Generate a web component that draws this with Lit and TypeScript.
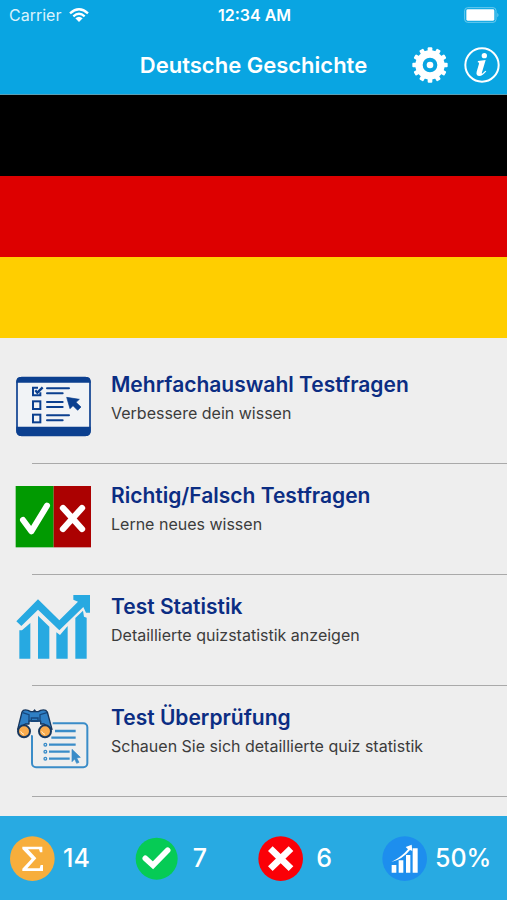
import { LitElement, html, css, svg } from "lit";
import { customElement } from "lit/decorators.js";

const quizIcon = html`<svg class="art" viewBox="45 18 240 210" aria-hidden="true">
  <rect x="51" y="38" width="219" height="173" rx="14" fill="#f1f3f6" stroke="#0b3f8f" stroke-width="5" />
  <path d="M49 53V49Q49 36 62 36H259Q272 36 272 49V53ZM49 185H272V199Q272 213 258 213H63Q49 213 49 199Z" fill="#0b3f8f" />
  <g fill="none" stroke="#0b3f8f" stroke-width="6">
    <path d="M114 68H99V91H121V82" />
    <path d="M106 76L112 83L128 67" stroke-width="7" />
    <rect x="99" y="109" width="22" height="23" />
    <rect x="99" y="149" width="22" height="23" />
    <path d="M141 70H207M141 85H188M141 111H188M141 126H188M141 151H207M141 166H188" stroke-width="6" stroke-linecap="round" />
  </g>
  <path d="M200 97L238 103L228 112L243 126L233 136L219 122L210 131Z" fill="#0b3f8f" stroke="#0b3f8f" stroke-width="2" />
</svg>`;

const trueFalseIcon = html`<svg class="art" viewBox="45 21 240 210" aria-hidden="true">
  <rect x="47" y="33" width="114" height="184" fill="#019a01" />
  <rect x="161" y="33" width="112" height="184" fill="#ab0101" />
  <g fill="none" stroke="#fff" stroke-width="18" stroke-linecap="round" stroke-linejoin="round">
    <path d="M69 135L94 169L141 92" />
    <path d="M189 99L246 162M246 99L189 162" stroke-width="19" />
  </g>
</svg>`;

const statsIcon = html`<svg class="art" viewBox="45 24 240 210" aria-hidden="true">
  <g fill="#27a9e1">
    <path d="M58 136L66 136L91 114V221H58ZM114 92L148 125V221H114ZM169 142L180 150L203 123V221H169ZM226 99L249 77L252 95L260 98V221H226Z" />
    <path d="M49 109L114 43L178 106L234 50L220 44V30H270V83H258L250 66L178 136L114 74L64 123Z" />
  </g>
</svg>`;

const reviewIcon = html`<svg class="art" viewBox="45 24 240 210" aria-hidden="true">
  <rect x="96" y="82" width="166" height="132" rx="12" fill="none" stroke="#3a8cc8" stroke-width="6" />
  <path d="M60 76L76 40H132L158 78V108L138 128L90 116Z" fill="#eee" />
  <g fill="none" stroke="#3a8cc8" stroke-width="7">
    <path d="M165 105H227M154 125H227M147 146H227M147 167H209M147 188H209" />
    <g stroke-width="4"><circle cx="136" cy="146" r="4" /><circle cx="136" cy="167" r="4" /><circle cx="136" cy="188" r="4" /></g>
  </g>
  <path d="M216 160L241 184L230 186L237 199L230 202L224 189L216 197Z" fill="#3a8cc8" stroke="#3a8cc8" stroke-width="2" />
  <path d="M53 100L66 48Q70 39 84 43L92 47H115L122 43Q137 39 142 48L156 100L132 84H122V75H87V84H76Z" fill="#2f7fc4" stroke="#17375e" stroke-width="4" stroke-linejoin="round" />
  <path d="M68 50L87 56V78M141 50L120 56V78M94 66H114V76H94Z" fill="none" stroke="#17477c" stroke-width="4" />
  <path d="M97 47L104 39L110 47Z" fill="#17375e" />
  <g fill="#f9ab4d" stroke="#17375e" stroke-width="6">
    <circle cx="72" cy="106" r="18" /><circle cx="135" cy="106" r="18" />
  </g>
  <path d="M62 106Q65 114 72 115M125 106Q128 114 135 115" fill="none" stroke="#fff0d0" stroke-width="3" />
</svg>`;

const teeth = Array.from({ length: 12 }, (_, i) => i * 30);

const gearIcon = html`<svg class="tool" viewBox="0 0 108 108" aria-hidden="true">
  <g fill="#fff">${teeth.map((a) => svg`<rect x="47" y="1" width="14" height="20" rx="3" transform="rotate(${a} 54 54)" />`)}</g>
  <circle cx="54" cy="54" r="33" fill="none" stroke="#fff" stroke-width="22" />
  <circle cx="54" cy="54" r="10" fill="#fff" />
</svg>`;

const infoIcon = html`<svg class="tool" viewBox="0 0 108 108" aria-hidden="true">
  <circle cx="54" cy="54" r="50" fill="none" stroke="#fff" stroke-width="6" />
  <circle cx="61" cy="26" r="8" fill="#fff" />
  <path d="M42 42L65 39L54 76Q52 82 56 79L64 71L67 73Q56 87 46 87Q35 86 38 74L45 50Q46 46 41 46Z" fill="#fff" />
</svg>`;

const sumBadge = html`<svg class="badge" viewBox="0 0 135 135" aria-hidden="true">
  <circle cx="67" cy="68" r="67" fill="#f7ae3c" />
  <path d="M37 32H97V49H90L87 40H54L79 67L52 97H89L92 87H99V105H37V98L65 68L37 39Z" fill="#fff" />
</svg>`;

const rightBadge = html`<svg class="badge" viewBox="0 0 135 135" aria-hidden="true">
  <circle cx="68" cy="68" r="63" fill="#06cb55" />
  <path d="M34 67L57 88L101 43" fill="none" stroke="#fff" stroke-width="17" stroke-linecap="round" stroke-linejoin="miter" />
</svg>`;

const wrongBadge = html`<svg class="badge" viewBox="0 0 135 135" aria-hidden="true">
  <circle cx="68" cy="68" r="67" fill="#fb0007" />
  <path d="M37 38L99 98M99 38L37 98" fill="none" stroke="#fff" stroke-width="20" />
</svg>`;

const rateBadge = html`<svg class="badge" viewBox="0 0 135 135" aria-hidden="true">
  <circle cx="68" cy="68" r="67" fill="#1d8eee" />
  <path d="M29 87H43V110H29ZM50 73H64V110H50ZM72 57H85V110H72ZM92 37H107V110H92Z" fill="#fff" />
  <path d="M28 78Q58 64 78 40L71 33L89 26L91 45L84 42Q62 70 28 78Z" fill="#fff" />
</svg>`;

const entries = [
  { icon: quizIcon, title: "Mehrfachauswahl Testfragen", note: "Verbessere dein wissen" },
  { icon: trueFalseIcon, title: "Richtig/Falsch Testfragen", note: "Lerne neues wissen" },
  { icon: statsIcon, title: "Test Statistik", note: "Detaillierte quizstatistik anzeigen" },
  { icon: reviewIcon, title: "Test Überprüfung", note: "Schauen Sie sich detaillierte quiz statistik" },
];

const totals = [
  { icon: sumBadge, value: "14" },
  { icon: rightBadge, value: "7" },
  { icon: wrongBadge, value: "6" },
  { icon: rateBadge, value: "50%" },
];

@customElement("app-root")
export class AppRoot extends LitElement {
  static styles = css`
    :host {
      display: flex;
      flex-direction: column;
      min-height: 100vh;
      background: #eee;
      font-family: Inter, "Liberation Sans", sans-serif;
    }
    * { box-sizing: border-box; }
    .top { background: #09a5e2; color: #fff; border-bottom: 1px solid #5a9fb5; }
    .status {
      display: grid;
      grid-template-columns: 1fr auto 1fr;
      align-items: center;
      height: 30px;
      padding: 0 7px 0 9px;
      font-size: 16px;
      line-height: 20px;
    }
    .carrier { display: flex; align-items: center; gap: 8px; color: #d9f3fc; }
    .wifi { width: 20px; height: 14px; }
    .clock { font-weight: 600; }
    .battery { width: 36px; height: 16px; justify-self: end; }
    .bar {
      display: grid;
      grid-template-columns: 1fr auto 1fr;
      align-items: center;
      height: 64px;
      padding: 6px 7px 0;
    }
    .heading { grid-column: 2; margin: 0; font-size: 22px; line-height: 28px; font-weight: 600; }
    .tools { display: flex; justify-content: flex-end; gap: 16px; }
    .tools button { display: block; padding: 0; border: 0; background: none; cursor: pointer; }
    .tool { display: block; width: 36px; height: 36px; }
    .flag { display: grid; grid-template-rows: repeat(3, 81px); }
    .black { background: #000; }
    .red { background: #dd0000; }
    .gold { background: #ffce00; }
    .menu {
      flex: 1;
      display: grid;
      grid-auto-rows: 1fr;
      margin: 0;
      padding: 15px 0 19px;
      list-style: none;
    }
    .entry { display: flex; flex-direction: column; }
    .entry::after { content: ""; height: 1px; margin-left: 32px; background: #a9a9a9; }
    .link {
      flex: 1;
      display: flex;
      align-items: flex-start;
      gap: 16px;
      padding: 18px 15px;
      color: #3c3c3c;
      text-decoration: none;
    }
    .art { flex: none; width: 80px; height: 70px; }
    .title { display: block; font-size: 21px; line-height: 28px; font-weight: 600; color: #0b2d83; }
    .note { display: block; font-size: 16px; line-height: 28px; }
    .totals {
      display: grid;
      grid-template-columns: repeat(4, 1fr);
      align-items: center;
      height: 84px;
      padding: 0 1px 0 10px;
      background: #28aae2;
      color: #fff;
    }
    .total { display: flex; align-items: center; gap: 8px; }
    .badge { flex: none; width: 45px; height: 45px; }
    .value { min-width: 26px; text-align: center; font-size: 25px; line-height: 28px; font-weight: 500; }
  `;

  render() {
    return html`
      <header class="top">
        <div class="status">
          <span class="carrier">Carrier
            <svg class="wifi" viewBox="0 0 60 42" aria-hidden="true">
              <path d="M3 16Q30 -8 57 16M13 25Q30 10 47 25" fill="none" stroke="#fff" stroke-width="7" />
              <path d="M19 31Q30 22 41 31L30 42Z" fill="#fff" />
            </svg>
          </span>
          <span class="clock">12:34 AM</span>
          <svg class="battery" viewBox="0 0 108 48" aria-hidden="true">
            <rect x="2" y="2" width="94" height="44" rx="9" fill="none" stroke="#6bcbee" stroke-width="3" />
            <rect x="7" y="7" width="84" height="34" rx="4" fill="#fff" />
            <path d="M100 17Q107 24 100 31Z" fill="#6bcbee" />
          </svg>
        </div>
        <div class="bar">
          <h1 class="heading">Deutsche Geschichte</h1>
          <div class="tools">
            <button type="button" aria-label="Einstellungen">${gearIcon}</button>
            <button type="button" aria-label="Info">${infoIcon}</button>
          </div>
        </div>
      </header>
      <div class="flag" role="img" aria-label="Flagge Deutschlands">
        <div class="black"></div>
        <div class="red"></div>
        <div class="gold"></div>
      </div>
      <ul class="menu">
        ${entries.map(
          (e) => html`<li class="entry">
            <a class="link" href="#">
              ${e.icon}
              <span><span class="title">${e.title}</span><span class="note">${e.note}</span></span>
            </a>
          </li>`
        )}
      </ul>
      <footer class="totals">
        ${totals.map((t) => html`<div class="total">${t.icon}<span class="value">${t.value}</span></div>`)}
      </footer>
    `;
  }
}
